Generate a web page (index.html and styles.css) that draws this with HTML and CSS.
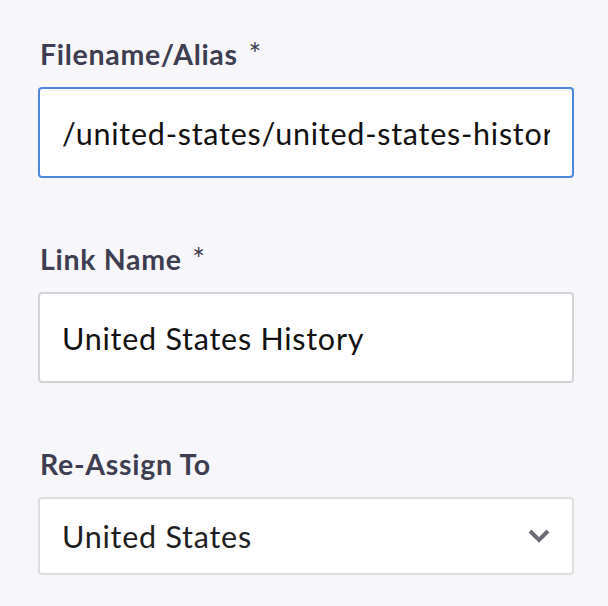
FILE: index.html
```html
<!DOCTYPE html>
<html lang="en">
<head>
<meta charset="utf-8">
<title>Link settings</title>
<link rel="stylesheet" href="styles.css">
</head>
<body>
<form class="form">
  <div class="field">
    <label class="label" for="alias">Filename/Alias <span class="req">*</span></label>
    <input class="control control--focus" id="alias" type="text" value="/united-states/united-states-history">
  </div>
  <div class="field">
    <label class="label" for="linkname">Link Name <span class="req">*</span></label>
    <input class="control" id="linkname" type="text" value="United States History">
  </div>
  <div class="field">
    <label class="label">Re-Assign To</label>
    <div class="control control--select" role="combobox" aria-expanded="false">
      <span class="select-value">United States</span>
      <svg class="chevron" width="22" height="14" viewBox="0 0 22 14" aria-hidden="true">
        <path d="M2 2 L11 11 L20 2" fill="none" stroke="#6c6c78" stroke-width="4" stroke-linecap="butt" stroke-linejoin="miter"/>
      </svg>
    </div>
  </div>
</form>
</body>
</html>
```
FILE: styles.css
```css
html, body {
  margin: 0;
  padding: 0;
  background: #f7f7f9;
}
body {
  font-family: Lato, "Open Sans", sans-serif;
}
.form {
  padding: 37px 34px 0 38px;
  display: flex;
  flex-direction: column;
  gap: 64px;
}
.field {
  display: flex;
  flex-direction: column;
}
.label {
  display: block;
  height: 34px;
  font-family: Lato, sans-serif;
  font-weight: 700;
  font-size: 28.5px;
  letter-spacing: 0.7px;
  line-height: 34px;
  color: #3e3e52;
  margin: 0 0 16px 2px;
}
.req {
  font-weight: 400;
  font-size: 30px;
  line-height: 0;
  margin-left: 3px;
}
.control {
  box-sizing: border-box;
  width: 536px;
  height: 91px;
  margin: 0;
  padding: 0 22px;
  border: 2px solid #d3d3d8;
  border-radius: 4px;
  background: #ffffff;
  font-family: Lato, sans-serif;
  font-size: 30.5px;
  letter-spacing: 0.75px;
  color: #111111;
  outline: none;
}
.control--focus {
  border-color: #4a89dc;
}
.control--select {
  height: 78px;
  display: flex;
  align-items: center;
  justify-content: space-between;
  border-color: #dedee0;
  padding-right: 22px;
  color: #1e1e22;
}
.chevron {
  display: block;
}
```
